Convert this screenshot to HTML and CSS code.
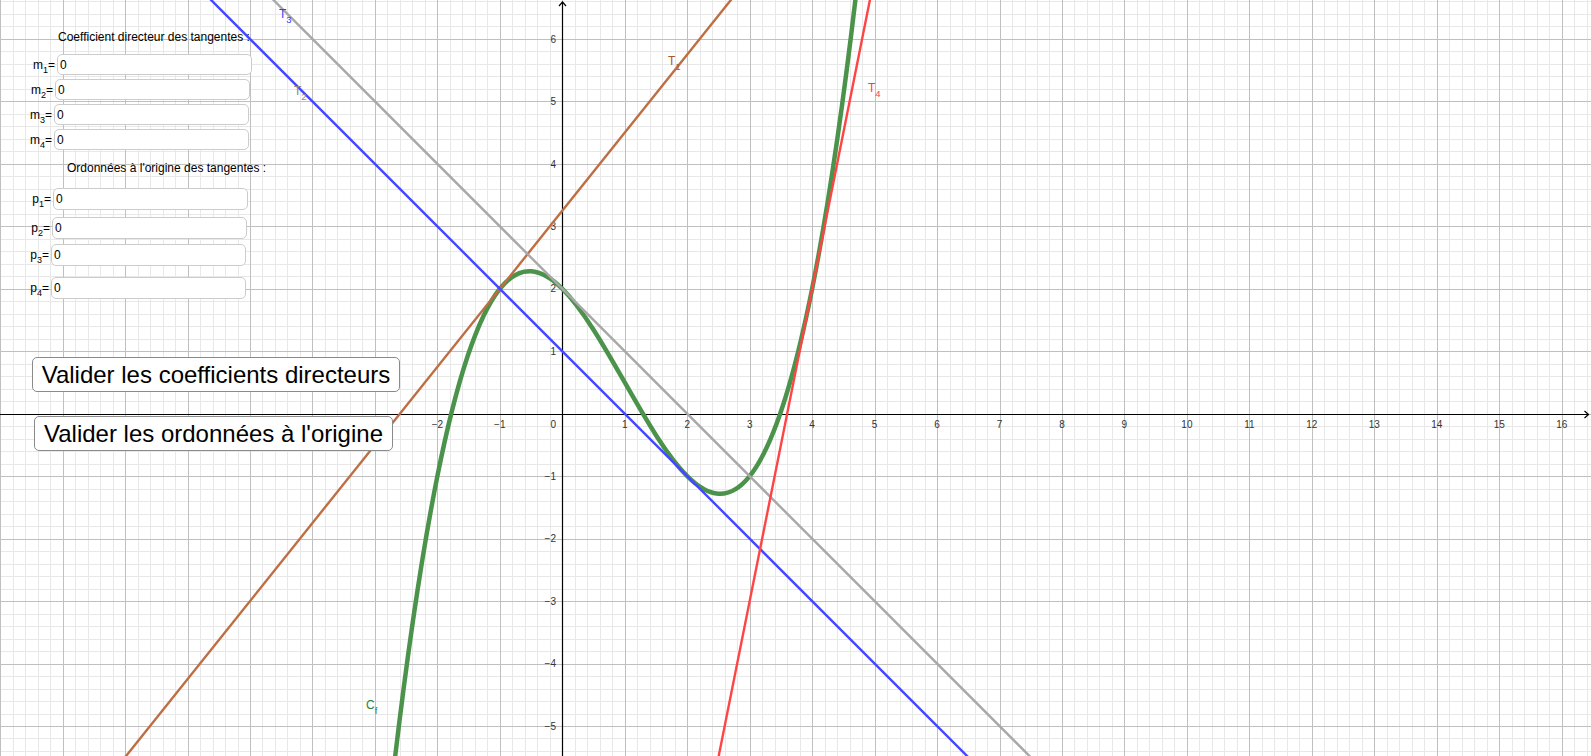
FILE: index.html
```html
<!DOCTYPE html>
<html lang="fr">
<head>
<meta charset="utf-8">
<title>Tangentes à une courbe</title>
<link rel="stylesheet" href="styles.css">
</head>
<body>
<div class="app">
  <svg class="graph" width="1591" height="756" viewBox="0 0 1591 756">
    <path id="grid-minor" class="grid-minor" d=""/>
    <path id="grid-major" class="grid-major" d=""/>
    <g class="axes">
      <path d="M0 414.5H1588M562.5 756V2"/>
      <path d="M1584.5 411L1588.5 414.5L1584.5 418M559 6L562.5 2L566 6"/>
    </g>
    <g class="tick tick-x">
      <text x="437.4" y="428">−2</text>
      <text x="499.8" y="428">−1</text>
      <text x="624.8" y="428">1</text>
      <text x="687.2" y="428">2</text>
      <text x="749.7" y="428">3</text>
      <text x="812.1" y="428">4</text>
      <text x="874.6" y="428">5</text>
      <text x="937.1" y="428">6</text>
      <text x="999.5" y="428">7</text>
      <text x="1062" y="428">8</text>
      <text x="1124.4" y="428">9</text>
      <text x="1186.9" y="428">10</text>
      <text x="1249.4" y="428">11</text>
      <text x="1311.8" y="428">12</text>
      <text x="1374.3" y="428">13</text>
      <text x="1436.7" y="428">14</text>
      <text x="1499.2" y="428">15</text>
      <text x="1561.7" y="428">16</text>
    </g>
    <g class="tick tick-y">
      <text x="556" y="428">0</text>
      <text x="556" y="42.6">6</text>
      <text x="556" y="105">5</text>
      <text x="556" y="167.5">4</text>
      <text x="556" y="230">3</text>
      <text x="556" y="292.4">2</text>
      <text x="556" y="354.9">1</text>
      <text x="556" y="479.8">−1</text>
      <text x="556" y="542.3">−2</text>
      <text x="556" y="604.7">−3</text>
      <text x="556" y="667.2">−4</text>
      <text x="556" y="729.7">−5</text>
    </g>
    <path class="curve" d="M374.92 944.61C541.48 -762.63 708.04 1527.57 874.6 -179.67"/>
    <path class="line line-t1" d="M-62.3 991.46L937.06 -257.75"/>
    <path class="line line-t2" d="M-62.3 -273.36L1186.9 975.84"/>
    <path class="line line-t3" d="M-62.3 -335.82L1186.9 913.38"/>
    <path class="line line-t4" d="M687.22 913.38L937.06 -335.82"/>
    <text class="lbl lbl-t1" x="668" y="65">T<tspan class="lbl-sub" dy="5">1</tspan></text>
    <text class="lbl lbl-t2" x="294" y="95">T<tspan class="lbl-sub" dy="5">2</tspan></text>
    <text class="lbl lbl-t3" x="279" y="17.5">T<tspan class="lbl-sub" dy="5">3</tspan></text>
    <text class="lbl lbl-t4" x="868" y="91.5">T<tspan class="lbl-sub" dy="5">4</tspan></text>
    <text class="lbl lbl-cf" x="366" y="708.5">C<tspan class="lbl-sub" dy="5">f</tspan></text>
  </svg>

  <div class="panel">
    <div class="heading heading-m">Coefficient directeur des tangentes :</div>
    <div class="field field-m1"><span class="field-label">m<span class="idx">1</span>=</span><div class="input">0</div></div>
    <div class="field field-m2"><span class="field-label">m<span class="idx">2</span>=</span><div class="input">0</div></div>
    <div class="field field-m3"><span class="field-label">m<span class="idx">3</span>=</span><div class="input">0</div></div>
    <div class="field field-m4"><span class="field-label">m<span class="idx">4</span>=</span><div class="input">0</div></div>
    <div class="heading heading-p">Ordonnées à l'origine des tangentes :</div>
    <div class="field field-p field-p1"><span class="field-label">p<span class="idx">1</span>=</span><div class="input">0</div></div>
    <div class="field field-p field-p2"><span class="field-label">p<span class="idx">2</span>=</span><div class="input">0</div></div>
    <div class="field field-p field-p3"><span class="field-label">p<span class="idx">3</span>=</span><div class="input">0</div></div>
    <div class="field field-p field-p4"><span class="field-label">p<span class="idx">4</span>=</span><div class="input">0</div></div>
    <button class="btn btn-m" type="button">Valider les coefficients directeurs</button>
    <button class="btn btn-p" type="button">Valider les ordonnées à l'origine</button>
  </div>
</div>
<script src="script.js"></script>
</body>
</html>
```

FILE: styles.css
```css
html, body {
  margin: 0;
  padding: 0;
  background: #ffffff;
  overflow: hidden;
}

.app {
  position: relative;
  width: 1591px;
  height: 756px;
  overflow: hidden;
  font-family: "Liberation Sans", Arial, sans-serif;
  color: #000;
}

.graph {
  display: block;
  width: 1591px;
  height: 756px;
}

.grid-minor {
  fill: none;
  stroke: #e8e8e8;
  stroke-width: 1;
}

.grid-major {
  fill: none;
  stroke: #c0c0c0;
  stroke-width: 1;
}

.axes path {
  fill: none;
  stroke: #000;
  stroke-width: 1.2;
}

.tick {
  font-family: "Liberation Sans", Arial, sans-serif;
  font-size: 10px;
  fill: #333;
}

.tick-x { text-anchor: middle; }
.tick-y { text-anchor: end; }

.curve {
  fill: none;
  stroke: #4b934b;
  stroke-width: 4.5;
}

.line {
  fill: none;
  stroke-width: 2.4;
}

.line-t1 { stroke: #bf6e44; }
.line-t2 { stroke: #4646ff; }
.line-t3 { stroke: #a8a8a8; }
.line-t4 { stroke: #ff4444; }

.lbl {
  font-family: "Liberation Sans", Arial, sans-serif;
  font-size: 12px;
}

.lbl-sub { font-size: 9.5px; }

.lbl-t1 { fill: #a65a30; }
.lbl-t2 { fill: #8a8a8a; }
.lbl-t3 { fill: #3a3aff; }
.lbl-t4 { fill: #ff3a3a; }
.lbl-cf { fill: #2f7d32; }

/* overlay panel of GeoGebra widgets */
.panel {
  position: absolute;
  left: 0;
  top: 0;
  display: flex;
  flex-direction: column;
  align-items: flex-start;
}

.heading {
  font-size: 12px;
  line-height: 14px;
  white-space: nowrap;
}

.heading-m { margin: 30px 0 0 58px; }
.heading-p { margin: 11px 0 0 67px; }

.field {
  display: flex;
  align-items: center;
}

.field-label {
  width: 26px;
  padding-right: 2px;
  box-sizing: border-box;
  text-align: right;
  font-size: 12px;
  line-height: 14px;
  white-space: nowrap;
}

.idx {
  font-size: 9px;
  line-height: 0;
  vertical-align: -4px;
}

.input {
  display: flex;
  align-items: center;
  box-sizing: border-box;
  width: 195px;
  height: 21px;
  padding-left: 2px;
  border: 1px solid #cccccc;
  border-radius: 5px;
  background: #fff;
  font-size: 12px;
}

.field-p .input { height: 22px; }

.field-m1 { margin: 10px 0 0 31px; }
.field-m2 { margin: 4px 0 0 29px; }
.field-m3 { margin: 4px 0 0 28px; }
.field-m4 { margin: 4px 0 0 28px; }
.field-p1 { margin: 13px 0 0 27px; }
.field-p2 { margin: 7px 0 0 26px; }
.field-p3 { margin: 5px 0 0 25px; }
.field-p4 { margin: 11px 0 0 25px; }

.btn {
  display: block;
  box-sizing: border-box;
  height: 35px;
  padding: 0;
  border: 1px solid #8a8a8a;
  border-radius: 5px;
  background: #fff;
  color: #000;
  font-family: "Liberation Sans", Arial, sans-serif;
  font-size: 24px;
  line-height: 33px;
  text-align: center;
  white-space: nowrap;
}

.btn-m { margin: 58px 0 0 32px; width: 368px; }
.btn-p { margin: 24px 0 0 34px; width: 359px; }
```

FILE: script.js
```js
(function () {
  var ox = 562.3, oy = 413.7, step = 62.46 / 5, W = 1591, H = 756;
  var minor = '', major = '';
  var k, p, c;
  for (k = Math.ceil(-ox / step); (p = ox + k * step) <= W; k++) {
    c = Math.round(p) + 0.5;
    if (k % 5 === 0) { major += 'M' + c + ' 0V' + H; } else { minor += 'M' + c + ' 0V' + H; }
  }
  for (k = Math.ceil(-oy / step); (p = oy + k * step) <= H; k++) {
    c = Math.round(p) + 0.5;
    if (k % 5 === 0) { major += 'M0 ' + c + 'H' + W; } else { minor += 'M0 ' + c + 'H' + W; }
  }
  document.getElementById('grid-minor').setAttribute('d', minor);
  document.getElementById('grid-major').setAttribute('d', major);
})();
```
